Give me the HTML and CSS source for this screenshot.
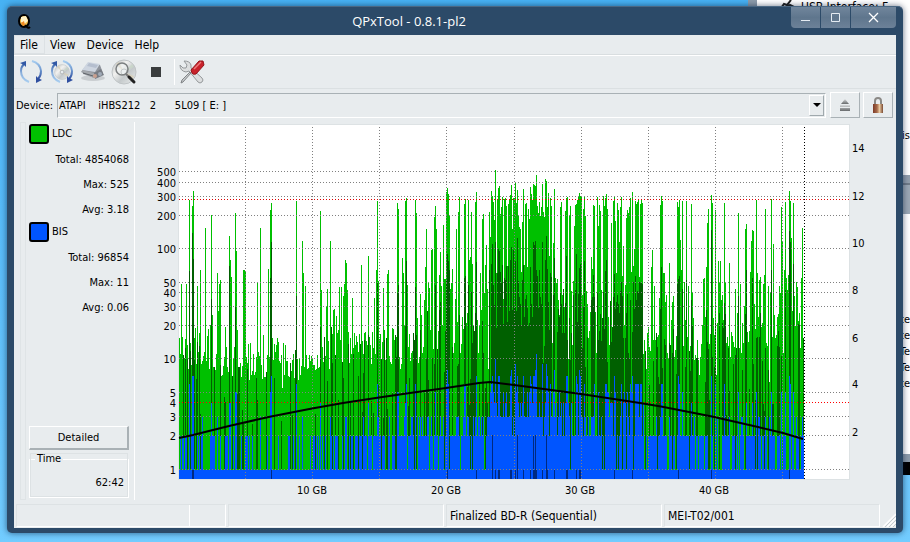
FILE: index.html
```html
<!DOCTYPE html>
<html lang="en">
<head>
<meta charset="utf-8">
<title>QPxTool - 0.8.1-pl2</title>
<link rel="stylesheet" href="styles.css">
</head>
<body>
<div class="back-window" aria-hidden="true">
  <div class="back-head"><svg width="18" height="8" viewBox="0 0 18 8"><path d="M2 8l3-4 3 1 4-5M7 8l4-3 4 2" fill="none" stroke="#222" stroke-width="2"/></svg>USB Interface: F</div>
  <div class="back-is">is</div>
  <div class="back-scroll"></div>
  <div class="back-list"><span>ate</span><span>te</span><span>Te</span><span>Te</span><span>te</span></div>
  <div class="back-foot"></div>
</div>
<main class="window">
  <header class="titlebar">
    <svg class="app-icon" width="16" height="16" viewBox="0 0 16 16"><ellipse cx="7" cy="7" rx="5" ry="6" fill="#f4c04a" stroke="#000" stroke-width="2"/><path d="M4 3l5-1 2 5-4 3-3-2z" fill="#fff3c8"/><path d="M4 9l3-2 1 4-2 1z" fill="#ef8a24"/><path d="M8 11q3 4 5 2" fill="none" stroke="#000" stroke-width="2"/></svg>
    <h1>QPxTool - 0.8.1-pl2</h1>
    <div class="win-buttons">
      <button aria-label="Minimize"><svg width="11" height="11" viewBox="0 0 11 11"><path d="M1 8.500h9" stroke="#e4ebf2"/></svg></button>
      <button aria-label="Maximize"><svg width="11" height="11" viewBox="0 0 11 11"><path d="M1.500 1.500h8v8h-8z" fill="none" stroke="#e4ebf2"/></svg></button>
      <button class="close" aria-label="Close"><svg width="11" height="11" viewBox="0 0 11 11"><path d="M1 1l9 9M10 1l-9 9" stroke="#fff" stroke-width="1.300"/></svg></button>
    </div>
  </header>
  <div class="client">
    <nav class="menubar"><button class="current">File</button><button>View</button><button>Device</button><button>Help</button></nav>
    <div class="toolbar">
      <button aria-label="Rescan bus"><svg width="26" height="26" viewBox="0 0 26 26"><use href="#arrows"/></svg></button>
      <button aria-label="Update media info"><svg width="26" height="26" viewBox="0 0 26 26"><use href="#disc" transform="translate(5 5) scale(.62)"/><use href="#arrows"/></svg></button>
      <button aria-label="Device info"><svg width="26" height="26" viewBox="0 0 26 26"><ellipse cx="13" cy="19" rx="12" ry="3" fill="#c9cdd0"/><path d="M1 13l7-9 12 2 3 8-9 5z" fill="#8f949c"/><path d="M8 3l12 2-5 8L2 11z" fill="#cdd5e0"/><path d="M9 4l9 2-2 3-9-2z" fill="#b4bece"/><path d="M2 11l12 3v5L3 15z" fill="#a4a8ad"/><path d="M3 14l10 3" stroke="#5e6369"/><path d="M14 14l7-4 3 6-9 4z" fill="#777c84"/><circle cx="15" cy="17" r="2" fill="#c9a08f"/><circle cx="20" cy="15" r="2" fill="#a0aab8"/></svg></button>
      <button aria-label="Media info"><svg width="26" height="26" viewBox="0 0 26 26"><use href="#disc"/><path d="M15 15l3 3" stroke="#777" stroke-width="2"/><path d="M18 18l5 5" stroke="#222" stroke-width="3" stroke-linecap="round"/><circle cx="11" cy="10" r="6" fill="#eef1f2" fill-opacity=".5" stroke="#7b7f80" stroke-width="1.500"/></svg></button>
      <button aria-label="Stop"><svg width="26" height="26" viewBox="0 0 26 26"><path d="M9 8h10v10H9z" fill="#3a3d3e"/></svg></button>
      <span class="separator"></span>
      <button aria-label="Preferences"><svg width="26" height="26" viewBox="0 0 26 26"><path d="M5 2l3 4-1 3-3 0-3-3q0 6 6 7l3-1 9 11q2 2 4 0t0-4L12 9l0-3q-1-4-7-4z" fill="#dcdedf" stroke="#95999b"/><path d="M12 14L4 23l-2 1 1-3 8-8z" fill="#c7cacc" stroke="#808486"/><path d="M12 11l8-9 4 0 1 4-8 9q-3 1-4-1z" fill="#c9222b" stroke="#94151b"/><path d="M15 10l7-7" stroke="#ee7c7c" stroke-width="1.500"/></svg></button>
    </div>
    <div class="device-row">
      <label for="device">Device:</label>
      <div class="select-wrap"><select id="device"><option>ATAPI &nbsp; &nbsp;iHBS212 &nbsp; 2 &nbsp; &nbsp; &nbsp;5L09 [ E: ]</option></select><span class="drop"></span></div>
      <button class="square" aria-label="Eject"><svg width="12" height="12" viewBox="0 0 12 12"><defs><linearGradient id="metal" x2="0" y2="1"><stop stop-color="#d8dbdc"/><stop offset="1" stop-color="#66696b"/></linearGradient></defs><path d="M6 0l4 5H2z" fill="url(#metal)"/><path d="M1 6h10v2H1zM1 9h10v3H1z" fill="url(#metal)"/></svg></button>
      <button class="square" aria-label="Lock"><svg width="12" height="16" viewBox="0 0 12 16"><defs><linearGradient id="brass"><stop stop-color="#7c3a28"/><stop offset=".4" stop-color="#a66a4a"/><stop offset=".65" stop-color="#e9c9a0"/><stop offset="1" stop-color="#7a4a33"/></linearGradient></defs><path d="M3 8V4q0-3 3-3t3 3v4" fill="none" stroke="#8b8986" stroke-width="2"/><path d="M1 7h10v9H1z" fill="url(#brass)"/></svg></button>
    </div>
    <div class="work">
      <div class="grip"></div>
      <aside class="side">
        <section class="stat"><h2><span class="swatch ldc"></span>LDC</h2><p>Total: 4854068</p><p>Max: 525</p><p>Avg: 3.18</p></section>
        <section class="stat"><h2><span class="swatch bis"></span>BIS</h2><p>Total: 96854</p><p>Max: 11</p><p>Avg: 0.06</p></section>
        <button class="detailed">Detailed</button>
        <fieldset class="time"><legend>Time</legend>62:42</fieldset>
      </aside>
      <svg class="chart" id="chart" viewBox="0 0 754 378" role="img" aria-label="LDC and BIS error rates"></svg>
    </div>
    <footer class="status">
      <div class="cell progress"><span></span></div><div class="cell"></div><div class="cell">Finalized BD-R (Sequential)</div><div class="cell">MEI-T02/001</div>
      <svg class="resize" width="14" height="14" viewBox="0 0 14 14"><path d="M1 14L14 1M5 14l9-9M9 14l5-5" stroke="#fff" stroke-width="1.500"/><path d="M3 14L14 3M7 14l7-7M11 14l3-3" stroke="#c5cccf"/></svg>
    </footer>
  </div>
</main>
<svg class="symbols" width="0" height="0" aria-hidden="true"><defs>
  <linearGradient id="silver" x2="1" y2="1"><stop stop-color="#b4b9bb"/><stop offset=".35" stop-color="#f2f2f0"/><stop offset=".6" stop-color="#c4c9cb"/><stop offset="1" stop-color="#ecefef"/></linearGradient>
  <linearGradient id="blueL" x2="0" y2="1"><stop stop-color="#3c66ae"/><stop offset=".5" stop-color="#8bb0dc"/><stop offset="1" stop-color="#a7cdf0"/></linearGradient>
  <linearGradient id="blueR" x2="0" y2="1"><stop stop-color="#a7cdf0"/><stop offset=".5" stop-color="#6d97cf"/><stop offset="1" stop-color="#2f4fa0"/></linearGradient>
  <g id="arrows"><path d="M11 23Q3 20 3 12q0-4 3-7" fill="none" stroke="url(#blueL)" stroke-width="2"/><path d="M2 4l6-2 0 6-2-2z" fill="#3158a5"/><path d="M14 2q8 2 9 10 0 5-3 8" fill="none" stroke="url(#blueR)" stroke-width="2"/><path d="M18 17l2 2 4 2-6 3z" fill="#2f4fa0"/></g>
  <g id="disc"><circle cx="13" cy="13" r="12" fill="url(#silver)" stroke="#bfc4c6"/><path d="M13 13L5 5l3-2zM13 13l8 8 2-4z" fill="#d8cfb4" opacity=".7"/><path d="M13 13L21 5l2 3z" fill="#c6d6c6" opacity=".7"/><circle cx="13" cy="13" r="3" fill="#e8ecee" stroke="#9a9fa1"/></g>
</defs></svg>
<script src="chart.js"></script>
</body>
</html>
```
FILE: styles.css
```css
* { box-sizing: border-box; }
html, body { margin: 0; height: 100%; }
body {
  position: relative;
  overflow: hidden;
  padding: 6px 7px 9px;
  background: linear-gradient(#47b2f4, #60c0fa 60%, #72ccff);
  font: 11px/14px "DejaVu Sans Condensed", "Noto Sans", sans-serif;
  color: #000;
}
button, select { font: inherit; color: inherit; margin: 0; padding: 0; border: 0; background: none; border-radius: 0; }
svg { display: block; }

.back-window {
  position: absolute;
  top: 0; right: 0;
  width: 162px; height: 475px;
  overflow: hidden;
  background: #fff;
  border-left: 9px solid #8d9cab;
}
.back-head { position: absolute; left: 22px; top: 0; display: flex; gap: 4px; font-size: 12px; }
.back-is { position: absolute; right: 0; top: 129px; }
.back-scroll { position: absolute; right: 0; top: 175px; width: 8px; height: 39px; background: linear-gradient(#929fad 8px, #6f7b88 8px 10px, #9ba8b5 10px); }
.back-list { position: absolute; right: 0; top: 312px; width: 8px; display: flex; flex-direction: column; align-items: flex-end; line-height: 16px; }
.back-foot { position: absolute; right: 0; bottom: 0; width: 100%; height: 21px; background: linear-gradient(#8d9cab 8px, #000 8px); }
.symbols { position: absolute; }

.window {
  position: relative;
  height: 100%;
  display: flex;
  flex-direction: column;
  padding: 0 7px 5px;
  border-radius: 5px;
  background: #2c4a68;
  border-top: 1px solid #4a6783;
  box-shadow: 0 0 6px rgba(0, 20, 50, .6);
}
.titlebar { position: relative; height: 28px; flex: none; display: flex; align-items: center; justify-content: center; }
.app-icon { position: absolute; left: 3px; top: 7px; }
.titlebar h1 { margin: 0; font: 13px/18px "Open Sans", sans-serif; color: #fff; padding-right: 92px; }
.win-buttons { position: absolute; right: 0; top: 0; display: flex; gap: 1px; }
.win-buttons button { width: 29px; height: 21px; display: grid; place-items: center; background: linear-gradient(#71869c, #5f768d 50%, #6c8198); }
.win-buttons .close { width: 45px; border-radius: 0 0 4px 0; }
.win-buttons button:first-child { border-radius: 0 0 0 4px; }

.client { flex: 1; min-height: 0; display: flex; flex-direction: column; background: #e8ecee; }
.menubar { display: flex; height: 20px; flex: none; border-bottom: 1px solid #d9dee0; font-size: 12px; }
.menubar button { padding: 0 6px 0 5px; }
.menubar .current { border: 1px solid #dce1e4; padding: 0 6px 0 5px; }
.toolbar { height: 34px; flex: none; display: flex; align-items: center; gap: 5px; padding: 0 4px; border-top: 1px solid #fff; border-bottom: 1px solid #dbe0e2; }
.separator { width: 1px; height: 26px; margin-left: 1px; margin-right: -1px; background: #fff; }

.device-row { height: 32px; flex: none; display: flex; align-items: center; gap: 4px; padding: 3px 3px 3px 2px; }
.device-row label { width: 37px; padding-top: 2px; }
.select-wrap { position: relative; flex: 1; height: 25px; border: 1px solid #fff; border-top-color: #a9b1b5; border-left-color: #a9b1b5; }
.select-wrap select { width: 100%; height: 100%; padding: 2px 1px 0; appearance: none; }
.drop { position: absolute; right: 1px; top: 1px; bottom: 1px; width: 15px; border: 1px solid #fff; border-right-color: #a0a9ad; border-bottom-color: #a0a9ad; display: grid; place-items: center; pointer-events: none; }
.drop::after { content: ""; border: 4px solid transparent; border-top-color: #000; border-bottom: 0; }
.square { width: 30px; height: 26px; display: grid; place-items: center; border: 1px solid #fff; border-right-color: #a9b1b5; border-bottom-color: #a9b1b5; }
.square:last-child { margin-left: -1px; }

.work { flex: 1; min-height: 0; display: flex; padding: 1px 7px 0 6px; align-items: flex-start; }
.grip { width: 6px; height: 378px; border: 1px solid #dfe4e6; }
.side { width: 109px; height: 378px; flex: none; display: flex; flex-direction: column; padding: 2px 5px 2px 3px; border-right: 1px solid #fff; }
.stat { height: 98px; }
.stat h2 { margin: 0; display: flex; align-items: center; gap: 3px; font-weight: normal; font-size: 11px; height: 20px; line-height: 24px; }
.stat p { margin: 0; height: 25px; line-height: 31px; text-align: right; }
.swatch { width: 20px; height: 20px; border: 2px solid #000; border-radius: 3px; }
.ldc { background: #00c000; }
.bis { background: #0055ff; }
.detailed { margin-top: auto; height: 24px; flex: none; border: 1px solid #fff; border-right: 2px solid #a9b1b5; border-bottom: 2px solid #a9b1b5; }
.time { margin: 2px 0 0; height: 46px; flex: none; min-width: 0; padding: 10px 4px 0; border: 1px solid #fff; outline: 1px solid #dde2e4; outline-offset: -2px; text-align: right; }
.time legend { padding: 0 2px; margin-left: 1px; text-align: left; background: #e8ecee; }
.chart { flex: 1; min-width: 0; font-size: 11px; }

.status { flex: none; height: 24px; display: flex; gap: 2px; padding: 0 0 1px 2px; font-size: 12px; }
.cell { flex: 1 1 0; padding: 4px 3px; border: 1px solid #dde2e4; border-right-color: #fff; border-bottom-color: #fff; white-space: nowrap; }
.progress { padding: 0; }
.progress span { display: block; width: 83%; height: 100%; border-right: 1px solid #fff; }
.resize { align-self: flex-end; flex: none; }
```
FILE: chart.js
```js
// Scan samples: column:peak top:average top, in plot pixels.
const peaks = `2:159 7:159 10:75:146 13:81:108 14:66:134 18:161 21:145 26:103 32:90:174 38:148 40:159 41:155
50:111:141 51:135 52:152 56:88 57:126 64:145 65:145 66:146 78:157 81:103 89:144 91:85:153 92:78:117 117:76:171
123:116 124:148 126:161 141:86 142:165 148:164 151:116 160:162 162:162 164:171 165:159 166:135 167:138 168:165
173:173 182:140 189:131 195:173 197:145 198:76:158 199:156 204:163 208:149 209:145 218:78 219:84:160 223:133
224:148 226:76 227:73:136 228:160 236:75:162 237:88 246:142 247:104 249:157 250:163 252:125 253:124 255:92
256:81:160 257:104 260:150 261:127 264:100 265:154 266:154 267:67:155 268:63:129 269:69:136 270:91:145 271:164
272:158 273:144 277:104 279:87 280:72 285:79:153 286:74:151 289:75:160 290:135 291:132 292:87:167 293:139
296:77 297:67:137 301:148 303:94 304:89 305:168 306:140 307:120 308:164 310:87 311:112 312:66:139 313:71:119
314:77:160 315:95 316:45:117 317:148 318:74:148 319:63:124 320:61:126 321:89 322:82:158 323:72:140 325:74:153
326:73 327:81:141 329:79:141 330:74 331:70:135 332:60:122 333:104 334:73:125 335:73 336:58:136 337:78 338:65:113
339:91 340:102 341:104 343:97 344:64:140 346:79 347:78 349:84 350:94 351:62:142 352:69 353:75 354:59:117 355:60:120
356:61:116 357:50:145 358:81 359:88 360:77:145 361:91 362:82 363:59:117 364:87 365:92 366:54:135 367:56:111
368:82:144 369:68 370:131 371:73:148 372:81:152 374:118 375:64:133 376:153 377:158 378:154 381:82 382:77 384:164
386:86 387:73:131 388:72 390:90 391:81 394:156 395:101 396:80 397:79:129 398:75 399:71 400:68:143 401:71:139
402:71 404:84 405:72:136 406:91 413:144 414:80:150 415:81 418:72 419:101 420:80 421:86 424:71 425:81 426:73:146
427:69:135 428:84 432:98 434:76 435:72:149 436:96 438:78 439:85 440:117 441:82 442:72:157 443:151 444:121
447:93 448:85 449:88 450:82 451:73 452:147 453:67 454:141 455:124 456:76:151 457:79 458:77 459:75 460:152
461:79 462:74 463:78 467:83 472:142 473:125 475:161 481:80 482:71:142 483:76 484:148 485:148 490:138 494:171
498:77:159 499:82:154 500:75:151 501:115 502:145 503:76:164 505:157 507:76:155 509:161 512:79 513:168 524:154
525:153 527:142 528:98 529:84 532:70:105 533:78 536:85 539:136 541:136 545:78 546:157 550:138 556:164 559:88
561:159 566:104 567:99:145 571:147 572:116 573:105:153 574:106 577:75 578:148 580:155 581:152 584:159 585:150
586:84 589:161 592:74:145 594:119 600:161 601:168 602:82 603:116 605:145 606:77:165 607:153 608:165 609:150
610:66:106 611:76:117 612:113 614:78:139 617:157 618:162 622:153 623:103`;

// Gaps between bursts: column:top.
const gaps = `43:250 48:242 62:252 70:255 72:250 86:252 103:263 112:246 119:255 121:250 134:240 221:244 231:236 232:228
233:226 239:238 240:232 243:228 244:222 274:228 275:218 281:228 282:219 299:228 309:244 373:218 389:234 393:220
409:213 410:206 417:228 430:220 464:229 467:244 489:234 519:235 520:250 521:232 537:250 551:232 590:257 621:223`;

// BIS bursts: column:errors per block.
const bis = `10:6 13:7 14:7 32:4 38:3 50:4 51:4 56:5 57:5 81:3 91:5 92:7 117:6 123:3 141:4 151:3 166:3 167:3 189:4
198:6 199:3 218:5 219:5 226:4 227:6 236:6 256:5 267:6 268:8 269:6 285:6 286:6 297:7 312:6 313:7 316:10 319:7
320:7 331:7 332:8 336:9 338:7 344:7 351:7 352:6 354:7 355:7 356:8 357:11 363:9 367:9 368:7 371:6 375:8 387:7
388:7 397:7 398:6 400:8 401:7 405:6 415:6 426:6 427:6 435:7 442:6 451:6 453:7 456:6 457:6 458:6 459:6 461:6
462:6 482:6 483:6 499:7 500:6 503:5 512:4 532:7 536:6 545:6 559:5 567:4 573:4 577:5 592:5 602:5 606:5 610:7
611:6 614:5 623:3`;

const parse = s => new Map(s.trim().split(/\s+/).map(e => {
  const [x, ...rest] = e.split(":").map(Number);
  return [x, rest];
}));
const bursts = parse(peaks), dips = parse(gaps), blocks = parse(bis);
const columns = 625, bottom = 354;
const level = v => Math.round(344.5 - 110.5 * Math.log10(v));

let seed = 20717;
const rand = () => {
  seed = (seed * 1664525 + 1013904223) >>> 0;
  return seed / 4294967296;
};

// [last column, highest, lowest, dark share, dark high, dark low, share of 2, share of 3]
const zones = [
  [35, 180, 245, .3, 215, 290, .4, .03],
  [70, 185, 252, .3, 215, 300, .3, .03],
  [120, 200, 254, .15, 220, 300, .2, .03],
  [145, 220, 248, .15, 225, 300, .35, .03],
  [190, 172, 244, .32, 200, 300, .5, .08],
  [230, 165, 242, .4, 185, 300, .7, .1],
  [310, 150, 225, .5, 165, 280, .8, .3],
  [375, 128, 175, .85, 145, 205, 1, .9],
  [465, 130, 205, .68, 155, 225, .93, .6],
  [530, 160, 235, .42, 180, 270, .75, .2],
  [625, 155, 228, .42, 180, 290, .6, .12]
];

const layers = { ldc: "", ldcAvg: "", bis: "", bisAvg: "" };
for (let x = 0; x < columns; x++) {
  const [, high, low, share, dHigh, dLow, two, three] = zones.find(z => x < z[0]);
  let top = Math.round(high + (low - high) * Math.sqrt(rand()));
  let avg = rand() < share ? Math.round(dHigh + (dLow - dHigh) * rand()) : bottom;
  if (bursts.has(x)) {
    const [t, d] = bursts.get(x);
    top = t;
    avg = d ?? Math.min(avg, t < 100 ? 165 + Math.round(rand() * 80) : bottom);
  }
  if (dips.has(x)) {
    top = dips.get(x)[0];
    avg = bottom;
  }
  const roll = rand(), tall = rand();
  let errors = 1;
  if (roll < three) errors = x > 310 && x < 465 && tall < .6 ? 4 + Math.floor(tall * 3) : 3;
  else if (roll < two) errors = 2;
  if (blocks.has(x)) errors = blocks.get(x)[0];
  avg = Math.max(avg, top);
  const column = y => `M${x} ${y}h1V${bottom}h-1z`;
  layers.ldc += column(top);
  if (avg < 344) layers.ldcAvg += `M${x} ${avg}h1V344h-1z`;
  layers.bis += column(level(errors));
  if (errors > 6) layers.bisAvg += column(345);
}
[313, 338, 354, 356, 367].forEach(x => { layers.bisAvg += `M${x} 310h1V354h-1z`; });

const row = (y, color = "#808080") => `<path d="M0 ${y}.5H670" stroke="${color}" stroke-dasharray="1 2"/>`;
const line = (x, color = "#808080") => `<path d="M${x}.5 2V354" stroke="${color}" stroke-dasharray="1 2"/>`;
const fill = (d, color) => `<path d="${d}" fill="${color}"/>`;
const text = (x, y, anchor, value) => `<text x="${x}" y="${y}" text-anchor="${anchor}">${value}</text>`;

const left = [[500, 54], [400, 65], [300, 79], [200, 98], [100, 131], [50, 165], [40, 175], [30, 189], [20, 208], [10, 241], [5, 275], [4, 285], [3, 299], [2, 318], [1, 352]];
const right = [[14, 30], [12, 78], [10, 125], [8, 172], [6, 220], [4, 266], [2, 314]];
const size = [[10, 177], [20, 311], [30, 445], [40, 579]];

document.getElementById("chart").innerHTML = `
  <g transform="translate(44 3)">
    <g shape-rendering="crispEdges">
      <path d="M-1-1H671V355H-1z" fill="#dde2e4"/>
      <path d="M0 0H670V354H0z" fill="#fff"/>
      ${fill(layers.ldc, "#00c000")}${fill(layers.ldcAvg, "#006000")}
      ${fill(layers.bis, "#0055ff")}${fill(layers.bisAvg, "#002a80")}
      ${[46, 57, 71, 90, 123, 157, 167, 181, 200, 233, 267, 291, 310, 344].map(y => row(y)).join("")}
      ${[66, 133, 200, 267, 335, 402, 469, 536, 603].map(x => line(x)).join("")}
      ${row(74, "#e00000")}${row(277, "#ff0000")}${line(625, "#000")}
    </g>
    <path d="M0 313L14 310 50 301 92 291.500 133 283.500 164 278 200 272.500 231 268 267 263 300 258 311 257 335 260 402 269 461 278 482 281.500 533 291.500 579 302 604 308 624 314" fill="none" stroke="#000" stroke-width="2"/>
  </g>
  ${left.map(([v, y]) => text(41, y, "end", v)).join("")}
  ${right.map(([v, y]) => text(717, y, "start", v)).join("")}
  ${size.map(([v, x]) => text(x, 372, "middle", v + " GB")).join("")}`;
```
